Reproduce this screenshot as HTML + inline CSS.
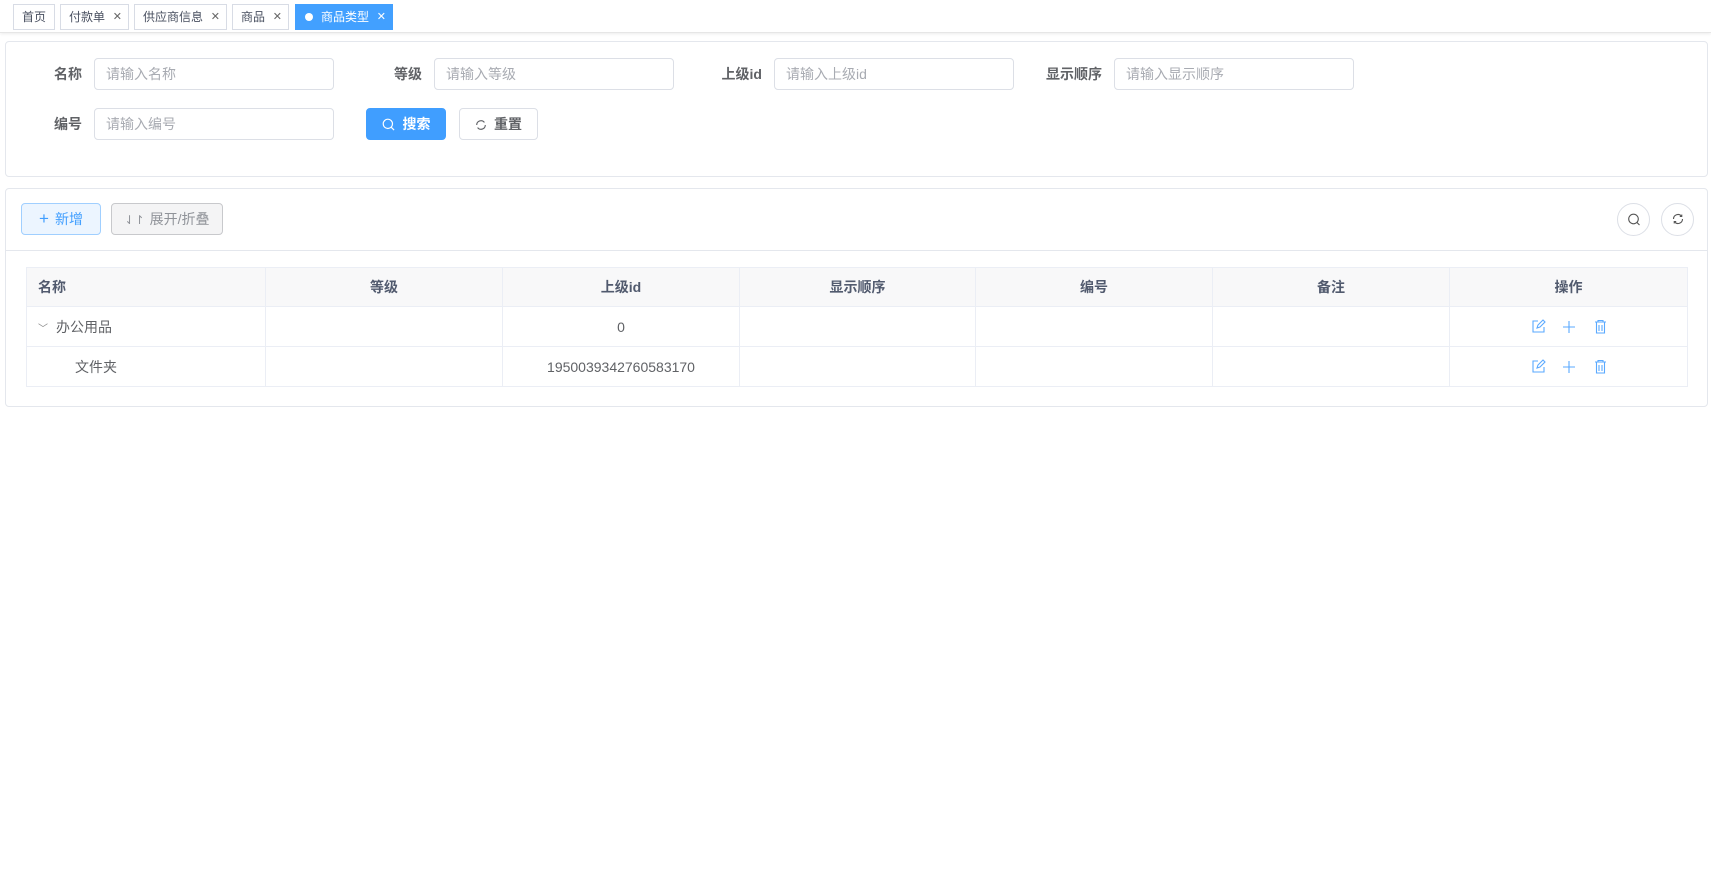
<!DOCTYPE html>
<html><head><meta charset="utf-8"><style>
*{box-sizing:border-box;margin:0;padding:0}
body{width:1711px;height:875px;background:#fff;font-family:"Liberation Sans","Noto Sans CJK SC",sans-serif;font-size:14px;color:#606266;position:relative;overflow:hidden}
.tabbar{position:absolute;left:0;top:0;width:1711px;height:33px;border-bottom:1px solid #e6e6e6;box-shadow:0 1px 3px rgba(0,0,0,.08)}
.tab{position:absolute;top:4px;height:26px;border:1px solid #d8dce5;font-size:12px;color:#495060;line-height:24px;padding-left:8px}
.tab .x{position:absolute;right:6px;top:0;font-size:11px;color:#666}
.tab.act{background:#42a0ff;border-color:#42a0ff;color:#fff}
.tab.act .x{color:#fff}
.card{position:absolute;left:5px;width:1703px;border:1px solid #e4e7ed;border-radius:4px;background:#fff}
.lbl{position:absolute;font-weight:bold;color:#606266;font-size:14px;text-align:right;width:70px;line-height:32px}
.inp{position:absolute;width:240px;height:32px;border:1px solid #dcdfe6;border-radius:4px;color:#a8abb2;padding-left:11px;line-height:30px;font-size:14px}
.btn{position:absolute;height:32px;border-radius:4px;font-size:14px;line-height:30px;text-align:center;border:1px solid #dcdfe6}
.circ{position:absolute;width:33px;height:33px;border-radius:50%;border:1px solid #dcdfe6}
table{position:absolute;left:20px;top:78px;border-collapse:collapse;width:1662px}
td,th{border:1px solid #ebeef5;height:40px;text-align:center;font-size:14px;color:#606266}
th{background:#f8f8f9;color:#515a6e;font-weight:bold;height:39px}
</style></head><body>
<div class="tabbar">
<div class="tab" style="left:13px;width:42px">首页</div>
<div class="tab" style="left:60px;width:69px">付款单<span class="x">✕</span></div>
<div class="tab" style="left:134px;width:93px">供应商信息<span class="x">✕</span></div>
<div class="tab" style="left:232px;width:57px">商品<span class="x">✕</span></div>
<div class="tab act" style="left:295px;width:98px;padding-left:25px"><span style="position:absolute;left:9px;top:8px;width:8px;height:8px;border-radius:50%;background:#fff"></span>商品类型<span class="x">✕</span></div>
</div>

<div class="card" style="top:41px;height:136px">
<div class="lbl" style="left:6px;top:16px">名称</div><div class="inp" style="left:88px;top:16px">请输入名称</div>
<div class="lbl" style="left:346px;top:16px">等级</div><div class="inp" style="left:428px;top:16px">请输入等级</div>
<div class="lbl" style="left:686px;top:16px">上级id</div><div class="inp" style="left:768px;top:16px">请输入上级id</div>
<div class="lbl" style="left:1026px;top:16px">显示顺序</div><div class="inp" style="left:1108px;top:16px">请输入显示顺序</div>
<div class="lbl" style="left:6px;top:66px">编号</div><div class="inp" style="left:88px;top:66px">请输入编号</div>
<div class="btn" style="left:360px;top:66px;width:80px;background:#409eff;border-color:#409eff;color:#fff;font-weight:bold">
<svg width="13" height="13" viewBox="0 0 14 14" style="vertical-align:-2px;margin-right:8px"><circle cx="6.3" cy="6.3" r="5" fill="none" stroke="#fff" stroke-width="1.3"/><path d="M10 10l3 3" stroke="#fff" stroke-width="1.3"/></svg>搜索</div>
<div class="btn" style="left:453px;top:66px;width:79px;color:#606266;font-weight:bold">
<svg width="12" height="12" viewBox="0 0 14 14" style="vertical-align:-2px;margin-right:7px"><path d="M2 7a5 5 0 0 1 9-3M12 7a5 5 0 0 1-9 3" fill="none" stroke="#606266" stroke-width="1.3"/></svg>重置</div>
</div>

<div class="card" style="top:188px;height:219px">
<div class="btn" style="left:15px;top:14px;width:80px;background:#ecf5ff;border-color:#a0cfff;color:#409eff">
<span style="font-size:17px;margin-right:6px">+</span>新增</div>
<div class="btn" style="left:105px;top:14px;width:112px;background:#f4f4f5;border-color:#c8c9cc;color:#909399">
<span style="font-size:12px;margin-right:5px">⇃↾</span>展开/折叠</div>
<div class="circ" style="left:1611px;top:14px"><svg width="33" height="31" viewBox="0 0 33 31"><circle cx="15.5" cy="15" r="4.8" fill="none" stroke="#555" stroke-width="1.1"/><path d="M19 18.5l2.5 2.5" stroke="#555" stroke-width="1.1"/></svg></div>
<div class="circ" style="left:1655px;top:14px"><svg width="33" height="31" viewBox="0 0 33 31"><path d="M11.5 15a4.5 4.5 0 0 1 8-2.8M20.5 15a4.5 4.5 0 0 1-8 2.8" fill="none" stroke="#555" stroke-width="1.1"/><path d="M19.8 10.5v2h-2M12.2 19.5v-2h2" fill="none" stroke="#555" stroke-width="1"/></svg></div>
<div style="position:absolute;left:0;top:61px;width:1701px;height:1px;background:#e4e7ed"></div>
<table>
<tr><th style="width:239px;text-align:left;padding-left:11px">名称</th><th style="width:237px">等级</th><th style="width:237px">上级id</th><th style="width:236px">显示顺序</th><th style="width:237px">编号</th><th style="width:237px">备注</th><th>操作</th></tr>
<tr><td style="text-align:left;padding-left:11px"><span style="font-size:10px;color:#888;margin-right:8px">﹀</span>办公用品</td><td></td><td>0</td><td></td><td></td><td></td><td class="ops"></td></tr>
<tr><td style="text-align:left;padding-left:48px">文件夹</td><td></td><td>1950039342760583170</td><td></td><td></td><td></td><td class="ops"></td></tr>
</table>
</div>
<svg style="position:absolute;left:0;top:0" width="1711" height="875">
<g fill="none" stroke="#5aa9ff" stroke-width="1.1">
<g id="ic" transform="translate(1532,320)"><path d="M6 1H1v11h11V7"/><path d="M5 8l1-3 5-5 2 2-5 5z"/>
<path d="M37 1v12M31 7h12"/>
<path d="M63 2h11M66 2V0.5h5V2M64.5 2v11h8V2M67 5v6M70 5v6"/></g>
<use href="#ic" y="40"/>
</g></svg>
</body></html>
